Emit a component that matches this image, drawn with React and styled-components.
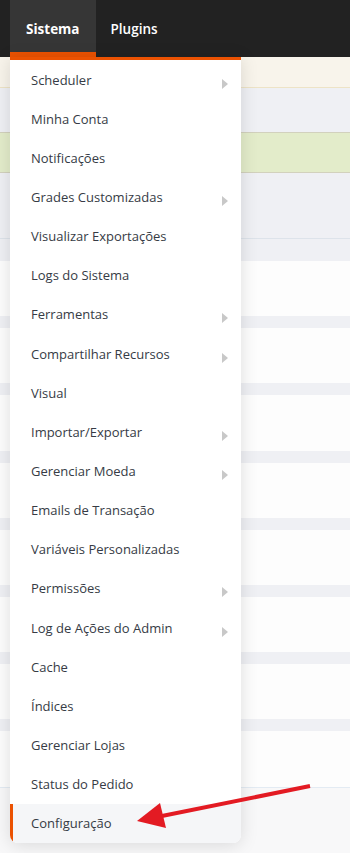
import React from "react";
import styled, { createGlobalStyle } from "styled-components";

const Global = createGlobalStyle`
  html, body { margin: 0; padding: 0; }
  body { font-family: "Open Sans", "Noto Sans", sans-serif; background: #f8f8f9; }
`;

const Page = styled.div`
  position: relative;
  width: 350px;
  height: 853px;
  overflow: hidden;
  background: #f8f8f9;
`;

const Header = styled.header`
  height: 57px;
  background: #222222;
  display: flex;
  align-items: flex-start;
  padding-left: 10px;
`;

const Tab = styled.div`
  height: 47px;
  padding: 0 ${(p) => (p.$active ? "16px" : "15px")};
  padding-top: 5px;
  display: flex;
  align-items: center;
  background: ${(p) => (p.$active ? "#363636" : "transparent")};
  border-bottom: 5px solid ${(p) => (p.$active ? "#eb5202" : "transparent")};
  color: #ffffff;
  font-size: 13.5px;
  font-weight: ${(p) => (p.$active ? 700 : 600)};
`;

const Notice = styled.div`
  height: 30px;
  background: #f8f4eb;
  border-bottom: 1px solid #ede3c6;
`;

const Band = styled.div`
  height: ${(p) => p.$h}px;
  background: #eff0f4;
  border-bottom: ${(p) => (p.$line ? "1px solid #dde3ea" : "none")};
`;

const Success = styled.div`
  height: 39px;
  background: #e3ecca;
  border-top: 1px solid #d2d1bd;
  border-bottom: 1px solid #d2d1bd;
`;

const Rows = styled.div`
  display: flex;
  flex-direction: column;
  gap: 12px;
  background: #eff0f4;
  border-bottom: 1px solid #e3ebf3;
`;

const Row = styled.div`
  height: 55.2px;
  background: #fdfdfd;
`;

const Menu = styled.nav`
  position: absolute;
  top: 57px;
  left: 10px;
  width: 231px;
  background: #ffffff;
  border-top: 3px solid #eb5202;
  border-radius: 0 0 8px 8px;
  overflow: hidden;
  box-shadow: 0 2px 18px rgba(0, 0, 0, 0.13);
`;

const Item = styled.div`
  height: 39.15px;
  display: flex;
  align-items: center;
  padding: 0 13px 0 21px;
  font-size: 13px;
  color: #363b45;
  background: ${(p) => (p.$active ? "#f5f6f8" : "#ffffff")};
  box-shadow: ${(p) => (p.$active ? "inset 3px 0 0 #eb5202" : "none")};
  white-space: nowrap;
`;

const Caret = styled.span`
  margin-left: auto;
  margin-top: 8px;
  width: 0;
  height: 0;
  border-left: 6px solid #c8c8c8;
  border-top: 5px solid transparent;
  border-bottom: 5px solid transparent;
`;

const Annotation = styled.svg`
  position: absolute;
  left: 0;
  top: 0;
  pointer-events: none;
`;

const items = [
  ["Scheduler", true],
  ["Minha Conta"],
  ["Notificações"],
  ["Grades Customizadas", true],
  ["Visualizar Exportações"],
  ["Logs do Sistema"],
  ["Ferramentas", true],
  ["Compartilhar Recursos", true],
  ["Visual"],
  ["Importar/Exportar", true],
  ["Gerenciar Moeda", true],
  ["Emails de Transação"],
  ["Variáveis Personalizadas"],
  ["Permissões", true],
  ["Log de Ações do Admin", true],
  ["Cache"],
  ["Índices"],
  ["Gerenciar Lojas"],
  ["Status do Pedido"],
  ["Configuração", false, true],
];

export default function App() {
  return (
    <>
      <Global />
      <Page>
        <Header>
          <Tab $active>Sistema</Tab>
          <Tab>Plugins</Tab>
        </Header>
        <Notice />
        <Band $h={44} />
        <Success />
        <Band $h={65} $line />
        <Band $h={22} />
        <Rows>
          {Array.from({ length: 8 }).map((_, i) => (
            <Row key={i} />
          ))}
        </Rows>
        <Menu>
          {items.map(([label, sub, active]) => (
            <Item key={label} $active={active}>
              {label}
              {sub && <Caret />}
            </Item>
          ))}
        </Menu>
        <Annotation width="350" height="853" viewBox="0 0 350 853">
          <line x1="310" y1="786" x2="152" y2="818" stroke="#e31b23" strokeWidth="4" />
          <polygon points="137,821 160,803 166,828" fill="#e31b23" />
        </Annotation>
      </Page>
    </>
  );
}
